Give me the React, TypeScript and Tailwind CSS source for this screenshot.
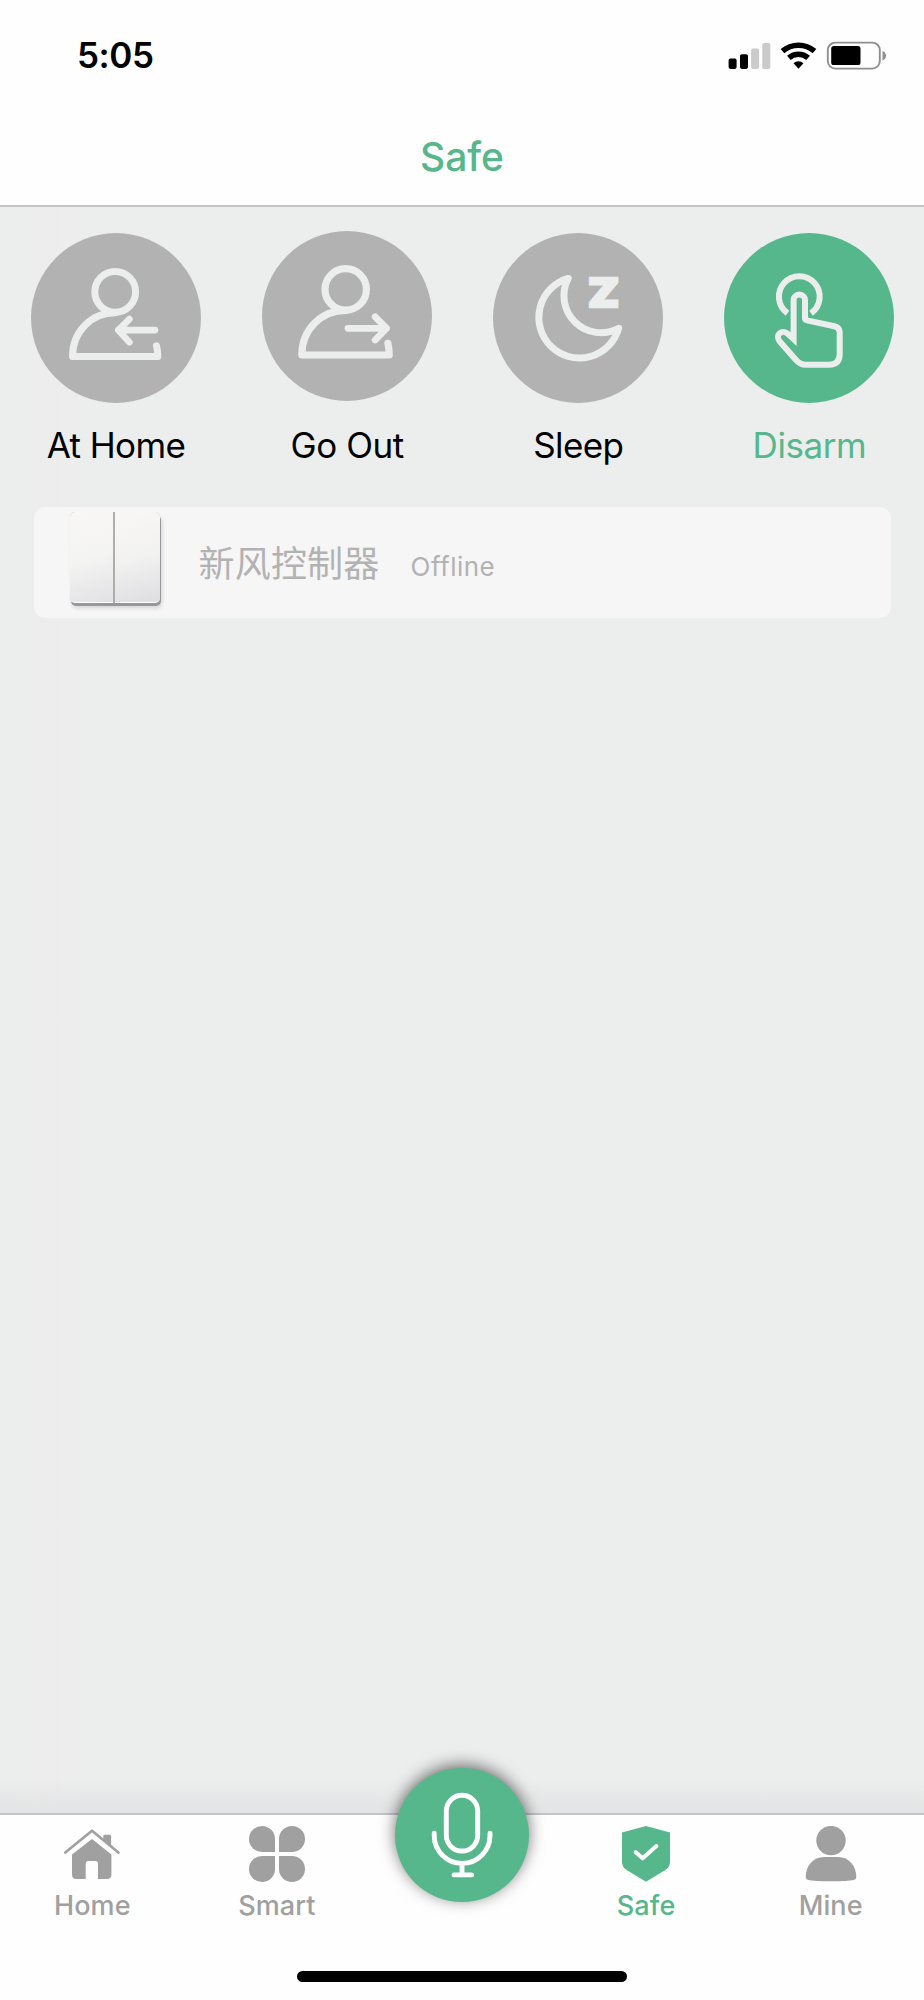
import type { ReactNode } from 'react';

const GLYPH = '#eceeed';

function StatusIcons() {
  return (
    <svg width="160" height="30" viewBox="0 0 160 30" fill="none">
      <rect x="1.6" y="17.6" width="8" height="10.3" rx="1.8" fill="#000" />
      <rect x="13" y="13.2" width="8" height="14.7" rx="1.8" fill="#000" />
      <rect x="24.1" y="7.6" width="8" height="20.3" rx="1.8" fill="#cbcbcb" />
      <rect x="35.3" y="2" width="8" height="26" rx="1.8" fill="#cbcbcb" />
      <g stroke="#000" strokeWidth="5.6">
        <path d="M55.5 10.2A24.5 24.5 0 0 1 87.5 10.2" />
        <path d="M61.9 16.8A14.6 14.6 0 0 1 81.1 16.8" />
      </g>
      <path d="M66.5 22.2A7.6 7.6 0 0 1 76.5 22.2L71.5 27.8Z" fill="#000" />
      <rect x="100.8" y="1.6" width="52" height="26" rx="7.5" stroke="#8f8f8f" strokeWidth="1.9" />
      <rect x="104.2" y="5.1" width="29.3" height="19" rx="2.6" fill="#000" />
      <path d="M155.5 10C160.2 11.6 160.2 18 155.5 19.6Z" fill="#8f8f8f" />
    </svg>
  );
}

function AtHomeIcon() {
  return (
    <svg width="170" height="170" viewBox="0 0 170 170" fill="none" stroke={GLYPH} strokeLinecap="round" strokeLinejoin="round">
      <circle cx="84.2" cy="58.8" r="20.4" strokeWidth="7" />
      <path d="M84.2 79.8C60 79.8 41.5 99 41.5 123.5H126.8Q126.8 118 125.5 112.8" strokeWidth="7" />
      <path d="M124 97.1H87.3M98.4 86.1L87.3 97.1L98.4 109.3" strokeWidth="6.6" />
    </svg>
  );
}

function GoOutIcon() {
  return (
    <svg width="170" height="170" viewBox="0 0 170 170" fill="none" stroke={GLYPH} strokeLinecap="round" strokeLinejoin="round">
      <circle cx="83.7" cy="58.4" r="20.7" strokeWidth="7.2" />
      <path d="M83.7 79.4C59 79.4 39.8 99 39.8 124H127.2Q127.2 118 125.9 112.3" strokeWidth="7.2" />
      <path d="M86 97.3H124.5M113.2 85.8L124.5 97.3L113.2 109" strokeWidth="6.8" />
    </svg>
  );
}

function SleepIcon() {
  return (
    <svg width="170" height="170" viewBox="0 0 170 170" fill="none">
      <path
        d="M75.2 45.4A40.6 40.6 0 1 0 125.6 95.2A37 37 0 0 1 75.2 45.4Z"
        stroke={GLYPH}
        strokeWidth="7"
        strokeLinejoin="round"
      />
      <text
        transform="translate(95 73.6) scale(1.14 1)"
        fill={GLYPH}
        stroke={GLYPH}
        strokeWidth="2.4"
        className="font-['Inter',sans-serif] text-[39.4px] font-black"
      >
        Z
      </text>
    </svg>
  );
}

function DisarmIcon() {
  return (
    <svg width="170" height="170" viewBox="0 0 170 170" fill="none" stroke={GLYPH} strokeWidth="6">
      <path d="M63.5 80.2A20.4 20.4 0 1 1 87.1 80.2" />
      <path d="M69.6 106.1V67.2A5.7 5.7 0 0 1 81 67.2V85.1Q81 87 83 87.4L110.5 93.2Q115.7 94.3 115.7 99.6V121.1Q115.7 131.8 105 131.8H82Q76 131.8 72 126.9L55.8 108.6C50.5 102.1 58 95.1 64.5 101.4Z" />
    </svg>
  );
}

function MicIcon() {
  return (
    <svg width="134" height="134" viewBox="0 0 134 134" fill="none" stroke="#fff" strokeWidth="4.9" strokeLinecap="round">
      <rect x="51.3" y="27.3" width="31.4" height="55.7" rx="15.7" />
      <path d="M39.2 65.3V67.5A27.9 27.9 0 0 0 95 67.5V65.3M67 95.5V106.7M59 106.9H76.6" />
    </svg>
  );
}

function HomeIcon() {
  return (
    <svg width="56" height="56" viewBox="0 0 56 56" fill="#a0a0a0">
      <path d="M1.3 26.6L28 4.8L54.4 26.6" fill="none" stroke="#a0a0a0" strokeWidth="2.6" strokeLinecap="round" strokeLinejoin="round" />
      <path d="M39.3 13.8V10.2Q39.3 8.8 40.8 8.8H45.6Q47.1 8.8 47.1 10.2V20.3Z" />
      <path d="M28 13L47.4 28.4V48.5Q47.4 53 42.9 53H34V38Q34 35 31 35H24.7Q21.7 35 21.7 38V53H12.5Q8 53 8 48.5V28.4Z" />
    </svg>
  );
}

function SmartIcon() {
  return (
    <svg width="56" height="56" viewBox="0 0 56 56" fill="#a0a0a0">
      <path d="M26 26H13A13 13 0 1 1 26 13Z" />
      <path d="M30 26V13A13 13 0 1 1 43 26Z" />
      <path d="M26 30V43A13 13 0 1 1 13 30Z" />
      <path d="M30 30H43A13 13 0 1 1 30 43Z" />
    </svg>
  );
}

function SafeIcon() {
  return (
    <svg width="56" height="56" viewBox="0 0 56 56">
      <path d="M28 0L52 6.4V36Q52 41 47 44.2L28 55.8L9 44.2Q4 41 4 36V6.4Z" fill="#57b78c" />
      <path d="M17.7 26.2L24.7 32.3L38.4 20" fill="none" stroke="#fff" strokeWidth="4" strokeLinecap="round" strokeLinejoin="round" />
    </svg>
  );
}

function MineIcon() {
  return (
    <svg width="56" height="56" viewBox="0 0 56 56" fill="#a0a0a0">
      <circle cx="28" cy="14.6" r="14.7" />
      <path d="M21 31H35C46 31 53.3 40 53.3 51Q53.3 53.3 50.8 54Q45 55.3 28 55.3Q11 55.3 5.2 54Q2.7 53.3 2.7 51C2.7 40 10 31 21 31Z" />
    </svg>
  );
}

function Mode({ label, icon, active = false, raised = false, tracking }: { label: string; icon: ReactNode; active?: boolean; raised?: boolean; tracking: string }) {
  return (
    <button className="flex w-[170px] flex-col items-center">
      <span className={`size-[170px] rounded-full ${active ? 'bg-[#57b78c]' : 'bg-[#b2b2b2]'} ${raised ? '-mt-[2px] mb-[2px]' : ''}`}>{icon}</span>
      <span className={`mt-[20px] text-[35px] leading-[44px] whitespace-nowrap ${tracking} ${active ? 'text-[#57b78c]' : 'text-black'}`}>{label}</span>
    </button>
  );
}

function Tab({ label, icon, active = false }: { label: string; icon: ReactNode; active?: boolean }) {
  return (
    <button className="flex flex-1 flex-col items-center pt-[11px]">
      {icon}
      <span className={`mt-[6px] text-[27px] leading-[36px] font-medium tracking-[0.1px] ${active ? 'text-[#57b78c]' : 'text-[#a0a0a0]'}`}>{label}</span>
    </button>
  );
}

export default function App() {
  return (
    <div className="flex h-[2000px] w-[924px] flex-col overflow-hidden bg-[#eceeed] font-['Inter','Noto_Sans_CJK_SC',sans-serif]">
      <header className="flex h-[207px] flex-col border-b-2 border-[#c4c6c5] bg-[#fefefe]">
        <div className="flex h-[111px] items-center justify-between pr-[37px] pl-[77px]">
          <span className="text-[35px] leading-none font-semibold tracking-[-0.4px]">5:05</span>
          <StatusIcons />
        </div>
        <h1 className="text-center text-[39px] leading-[91px] font-medium text-[#57b78c]">Safe</h1>
      </header>

      <main className="flex flex-1 flex-col bg-[linear-gradient(to_right,transparent_20px,#eeecec_45px,transparent_80px)]">
        <div className="flex justify-between pt-[25.5px] pr-[29.5px] pl-[31px]">
          <Mode label="At Home" icon={<AtHomeIcon />} tracking="tracking-[-0.6px]" />
          <Mode label="Go Out" icon={<GoOutIcon />} raised tracking="tracking-[-0.4px]" />
          <Mode label="Sleep" icon={<SleepIcon />} tracking="tracking-[-0.6px]" />
          <Mode label="Disarm" icon={<DisarmIcon />} active tracking="tracking-[-0.4px]" />
        </div>

        <div className="mx-[33.5px] mt-[40.5px] flex h-[111px] rounded-[11px] bg-[#f6f6f6]">
          <div className="mt-[5px] ml-[36px] flex h-[91px] w-[90px] gap-[2px] rounded-[5px] bg-[#b1adaa] shadow-[1px_3px_0_#96989c,2px_5px_4px_rgba(0,0,0,0.14)]">
            <div className="w-[43px] rounded-l-[5px] border-b border-white bg-linear-165 from-[#f8f7f5] via-[#f4f4f3] to-[#e2e2e5]" />
            <div className="flex-1 rounded-r-[5px] border-b border-white bg-linear-165 from-[#f8f7f5] via-[#f2f2f1] to-[#dedee2]" />
          </div>
          <span className="ml-[39px] text-[36px] leading-[115px] tracking-[0.2px] text-[#b2b2b2]">新风控制器</span>
          <span className="mt-[2px] ml-[31px] text-[26px] leading-[116px] tracking-[0.5px] text-[#b2b2b2]">Offline</span>
        </div>

        <div className="mt-auto h-[34px] bg-linear-to-b from-transparent to-[#e2e4e5]" />
      </main>

      <footer className="flex h-[187px] flex-col justify-between border-t-2 border-[#c4c4c5] bg-[#fefefe] pr-px pb-[18px]">
        <nav className="flex">
          <Tab label="Home" icon={<HomeIcon />} />
          <Tab label="Smart" icon={<SmartIcon />} />
          <div className="relative flex-1">
            <button className="absolute -top-[47px] left-[26px] size-[134px] rounded-full bg-[#57b78c] shadow-[0_-3px_16px_rgba(0,0,0,0.55)]">
              <MicIcon />
            </button>
          </div>
          <Tab label="Safe" icon={<SafeIcon />} active />
          <Tab label="Mine" icon={<MineIcon />} />
        </nav>
        <div className="h-[11px] w-[330px] self-center rounded-full bg-black" />
      </footer>
    </div>
  );
}
